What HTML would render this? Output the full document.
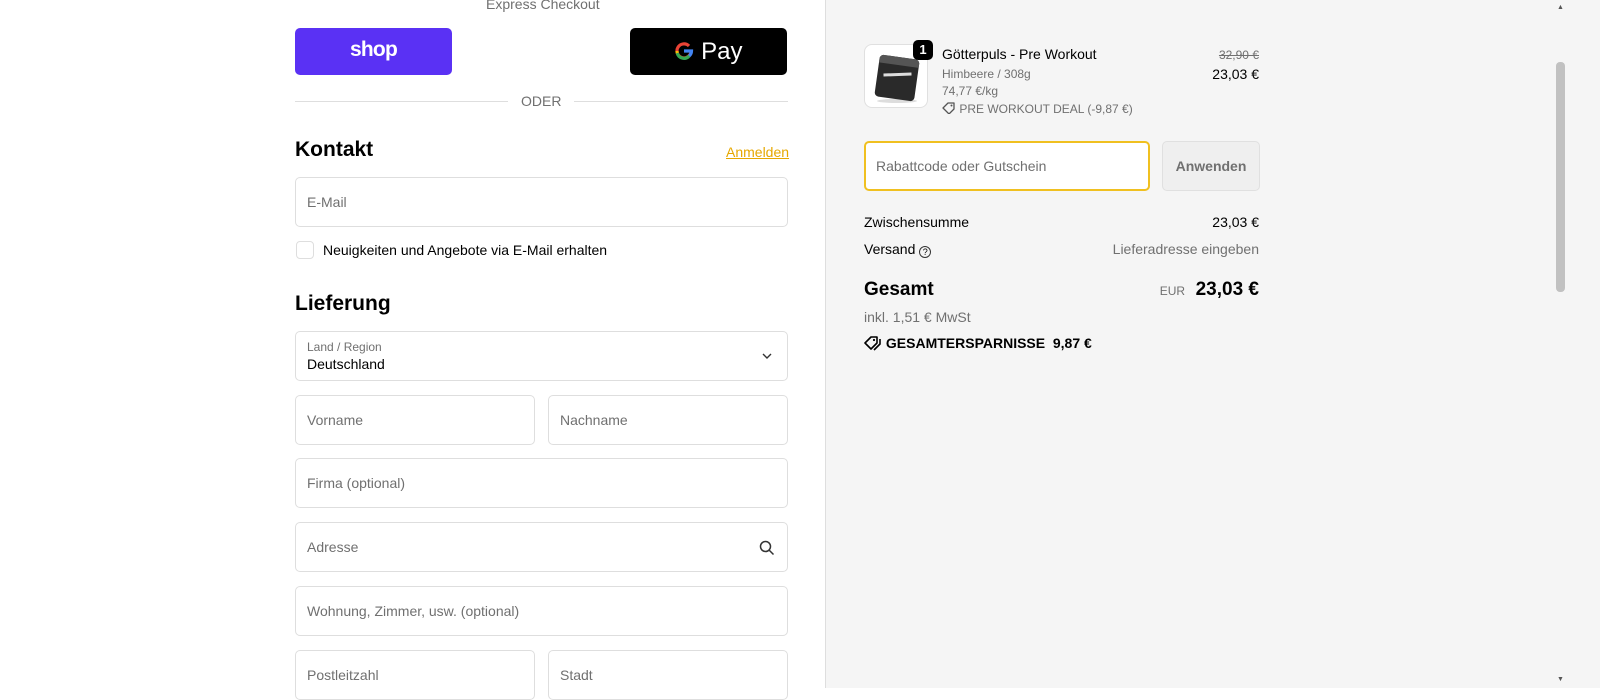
<!DOCTYPE html>
<html><head><meta charset="utf-8"><style>
*{box-sizing:border-box;margin:0;padding:0}
body{width:1600px;height:688px;overflow:hidden;font-family:"Liberation Sans",sans-serif;background:#fff;position:relative;color:#000}
.a{position:absolute}
.inp{position:absolute;border:1px solid #dedede;border-radius:5px;background:#fff;font-size:14px;color:#707070;padding-left:11px;display:flex;align-items:center}
.right{position:absolute;left:825px;top:0;width:775px;height:688px;background:#f5f5f5;border-left:1px solid #dedede}
</style></head><body>
<div class="a" style="left:486px;top:-4px;font-size:14px;color:#707070">Express Checkout</div>
<div class="a" style="left:295px;top:28px;width:157px;height:47px;background:#5a31f4;border-radius:5px;color:#fff;font-weight:bold;font-size:21px;text-align:center;line-height:44px;letter-spacing:-0.8px">shop</div>
<div class="a" style="left:630px;top:28px;width:157px;height:47px;background:#000;border-radius:5px;color:#fff;font-size:24px;line-height:47px;text-align:center"><svg width="20" height="20" viewBox="0 0 20 20" style="vertical-align:-2px"><path d="M17 10a7 7 0 1 1-2-5" fill="none" stroke="#ea4335" stroke-width="3.2"/><path d="M3.2 12a7 7 0 0 0 12 3" fill="none" stroke="#34a853" stroke-width="3.2"/><path d="M3 10a7 7 0 0 0 .3 2" fill="none" stroke="#fbbc05" stroke-width="3.2"/><path d="M10 10h7.5a7 7 0 0 1-2.3 5" fill="none" stroke="#4285f4" stroke-width="3.2"/></svg> Pay</div>
<div class="a" style="left:295px;top:101px;width:213px;height:1px;background:#dedede"></div>
<div class="a" style="left:574px;top:101px;width:214px;height:1px;background:#dedede"></div>
<div class="a" style="left:521px;top:93px;font-size:14px;color:#707070">ODER</div>
<div class="a" style="left:295px;top:138px;font-size:21px;font-weight:bold">Kontakt</div>
<div class="a" style="left:726px;top:144px;font-size:14px;color:#e6a800;text-decoration:underline">Anmelden</div>
<div class="inp" style="left:295px;top:177px;width:493px;height:50px">E-Mail</div>
<div class="a" style="left:296px;top:241px;width:18px;height:18px;border:1px solid #dedede;border-radius:4px;background:#fff"></div>
<div class="a" style="left:323px;top:242px;font-size:14px">Neuigkeiten und Angebote via E-Mail erhalten</div>
<div class="a" style="left:295px;top:292px;font-size:21px;font-weight:bold">Lieferung</div>
<div class="inp" style="left:295px;top:331px;width:493px;height:50px;display:block;padding-top:8px"><div style="font-size:12px">Land / Region</div><div style="color:#000;font-size:14px;margin-top:2px">Deutschland</div><svg class="a" style="right:14px;top:20px" width="12" height="8" viewBox="0 0 12 8"><path d="M2 2l4 4 4-4" fill="none" stroke="#333" stroke-width="1.4"/></svg></div>
<div class="inp" style="left:295px;top:395px;width:240px;height:50px">Vorname</div>
<div class="inp" style="left:548px;top:395px;width:240px;height:50px">Nachname</div>
<div class="inp" style="left:295px;top:458px;width:493px;height:50px">Firma (optional)</div>
<div class="inp" style="left:295px;top:522px;width:493px;height:50px">Adresse<svg class="a" style="right:12px;top:17px" width="16" height="16" viewBox="0 0 16 16"><circle cx="6.5" cy="6.5" r="5" fill="none" stroke="#333" stroke-width="1.5"/><path d="M10 10l4.5 4.5" stroke="#333" stroke-width="1.5"/></svg></div>
<div class="inp" style="left:295px;top:586px;width:493px;height:50px">Wohnung, Zimmer, usw. (optional)</div>
<div class="inp" style="left:295px;top:650px;width:240px;height:50px;align-items:flex-start;padding-top:16px">Postleitzahl</div>
<div class="inp" style="left:548px;top:650px;width:240px;height:50px;align-items:flex-start;padding-top:16px">Stadt</div>
<div class="right">
<div class="a" style="left:38px;top:44px;width:64px;height:64px;background:#fff;border:1px solid #e0e0e0;border-radius:8px;overflow:hidden">
<div class="a" style="left:12px;top:54px;width:40px;height:4px;background:#ddd;border-radius:50%"></div>
<div class="a" style="left:12px;top:12px;width:40px;height:42px;background:#2a2a2a;border-radius:4px;transform:rotate(8deg)"><div style="height:8px;background:#555;border-radius:4px 4px 0 0"></div><div style="margin:8px 6px;height:3px;background:#ddd;transform:rotate(-10deg)"></div></div></div>
<div class="a" style="left:87px;top:40px;width:20px;height:20px;background:#000;color:#fff;border-radius:5px;font-size:13px;font-weight:bold;text-align:center;line-height:20px">1</div>
<div class="a" style="left:116px;top:46px;font-size:14px">Götterpuls - Pre Workout</div>
<div class="a" style="left:116px;top:67px;font-size:12px;color:#707070">Himbeere / 308g</div>
<div class="a" style="left:116px;top:84px;font-size:12px;color:#707070">74,77 €/kg</div>
<div class="a" style="left:116px;top:102px;font-size:12px;color:#707070"><svg width="14" height="12" viewBox="0 0 14 12" style="vertical-align:-1px"><path d="M1 6l5-5h6v6l-5 5z" fill="none" stroke="#555" stroke-width="1.3" stroke-linejoin="round"/><circle cx="9.5" cy="3.5" r="1" fill="#555"/></svg> PRE WORKOUT DEAL (-9,87 €)</div>
<div class="a" style="right:341px;top:48px;font-size:12px;color:#707070;text-decoration:line-through">32,90 €</div>
<div class="a" style="right:341px;top:66px;font-size:14px">23,03 €</div>
<div class="a" style="left:38px;top:141px;width:286px;height:50px;background:#fff;border:2px solid #f0c020;border-radius:5px;font-size:14px;color:#707070;padding:15px 10px">Rabattcode oder Gutschein</div>
<div class="a" style="left:336px;top:141px;width:98px;height:50px;background:#efefef;border:1px solid #e0e0e0;border-radius:5px;font-size:14px;font-weight:bold;color:#707070;text-align:center;line-height:48px">Anwenden</div>
<div class="a" style="left:38px;top:214px;font-size:14px">Zwischensumme</div>
<div class="a" style="right:341px;top:214px;font-size:14px">23,03 €</div>
<div class="a" style="left:38px;top:241px;font-size:14px">Versand <span style="font-size:9px;border:1px solid #333;border-radius:50%;display:inline-block;width:12px;height:12px;line-height:10px;text-align:center;vertical-align:-1px">?</span></div>
<div class="a" style="right:341px;top:241px;font-size:14px;color:#707070">Lieferadresse eingeben</div>
<div class="a" style="left:38px;top:279px;font-size:19px;font-weight:bold">Gesamt</div>
<div class="a" style="right:341px;top:279px;font-size:19px;font-weight:bold"><span style="font-size:12px;font-weight:normal;color:#707070">EUR</span>&nbsp; 23,03 €</div>
<div class="a" style="left:38px;top:309px;font-size:14px;color:#707070">inkl. 1,51 € MwSt</div>
<div class="a" style="left:38px;top:335px;font-size:14px;font-weight:bold"><svg width="18" height="16" viewBox="0 0 18 16" style="vertical-align:-3px"><path d="M1 8l6-6h6v6l-6 6z" fill="none" stroke="#000" stroke-width="1.6" stroke-linejoin="round"/><path d="M16 4v5l-6 6" fill="none" stroke="#000" stroke-width="1.6"/><circle cx="10" cy="5" r="1.1" fill="#000"/></svg> GESAMTERSPARNISSE&nbsp; 9,87 €</div>
<div class="a" style="left:730px;top:62px;width:9px;height:230px;background:#c1c1c1;border-radius:4px"></div>
<div class="a" style="left:731px;top:4px;font-size:7px;color:#555">▲</div>
<div class="a" style="left:731px;top:676px;font-size:7px;color:#555">▼</div>
</div>
</body></html>
